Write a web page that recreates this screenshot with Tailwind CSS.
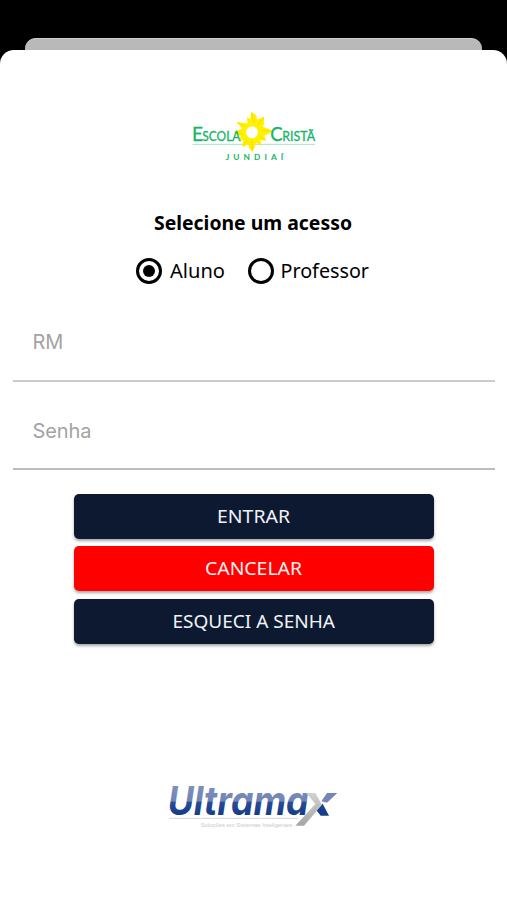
<!DOCTYPE html>
<html lang="pt-BR">
<head>
<meta charset="utf-8">
<meta name="viewport" content="width=device-width, initial-scale=1">
<title>Escola Cristã Jundiaí</title>
<script src="https://cdn.jsdelivr.net/npm/@tailwindcss/browser@4"></script>
</head>
<body class="bg-black">
<div class="flex h-[900px] w-[507px] flex-col overflow-hidden bg-black pt-[38px] font-['Noto_Sans',sans-serif] text-black">
  <div class="mx-[25px] h-[12px] shrink-0 rounded-t-[11px] border-t border-[#cfcfcf] bg-[#b9b9b9]"></div>
  <main class="flex grow flex-col items-center rounded-t-[14px] bg-white pt-[50px]">
    <svg class="mr-[-3px] h-[70px] w-[150px] shrink-0" viewBox="0 0 450 210" role="img" aria-label="Escola Cristã Jundiaí">
      <path d="M38 133H405" stroke="#a5e3c2" stroke-width="3"/>
      <path fill="#fff100" d="M214 35L229 45L231 59L252 50L252 72L249 80L278 92L265 103L252 107L258 122L240 121L246 137L228 128L223 145L217 156L207 143L206 132L187 142L190 120L181 124L181 108L161 97L178 89L186 86L170 65L193 70L203 69L200 52L211 57Z"/>
      <path d="M214 39L221 66M250 54L236 73M272 92L244 92M256 119L239 109M217 150L216 121M190 138L202 117M168 97L192 103M173 68L197 80" stroke="#ffda00" stroke-width="3"/>
      <circle cx="216" cy="97" r="18" fill="#fff"/>
      <g fill="#16b568" stroke="#16b568" stroke-width="1" font-family="Lato, sans-serif">
        <text x="36" y="123" font-size="60" textLength="33" lengthAdjust="spacingAndGlyphs">E</text>
        <text x="67" y="123" font-size="41" textLength="114" lengthAdjust="spacingAndGlyphs">SCOLA</text>
        <text x="271" y="123" font-size="60" textLength="37" lengthAdjust="spacingAndGlyphs">C</text>
        <text x="307" y="123" font-size="41" textLength="98" lengthAdjust="spacingAndGlyphs">RISTÃ</text>
        <text x="137" y="181" font-size="25" stroke="none" font-weight="700" textLength="173" lengthAdjust="spacing">JUNDIAÍ</text>
      </g>
    </svg>
    <h1 class="mt-[37px] mr-[2px] h-8 font-bold"><svg class="h-8 w-[204px]" viewBox="0 0 204 32"><text x="3" y="23" font-size="20" textLength="198" lengthAdjust="spacingAndGlyphs">Selecione um acesso</text></svg></h1>
    <div class="mt-[18px] mr-px flex h-7 w-[234px] items-center text-[20px]">
      <span class="flex size-[26px] shrink-0 items-center justify-center rounded-full border-[3px] border-black"><span class="size-[12px] rounded-full bg-black"></span></span>
      <svg class="ml-[7px] h-7 w-[57px] shrink-0" viewBox="0 0 57 28"><text x="1" y="21" font-size="20" textLength="55" lengthAdjust="spacingAndGlyphs">Aluno</text></svg>
      <span class="ml-[22px] size-[26px] shrink-0 rounded-full border-[3px] border-black"></span>
      <svg class="ml-[6px] h-7 w-[90px] shrink-0" viewBox="0 0 90 28"><text x="0.5" y="21" font-size="20" textLength="88.5" lengthAdjust="spacingAndGlyphs">Professor</text></svg>
    </div>
    <div class="mt-[18px] ml-px flex h-[79px] w-[482px] items-center border-b-2 border-[#cbcbcb] pt-px pl-[19.5px] font-['Inter',sans-serif] text-[20px] text-[#a3a3a3]">RM</div>
    <div class="mt-[10px] ml-px flex h-[78px] w-[482px] items-center border-b-2 border-[#bdbdbd] pt-px pl-[19.5px] font-['Inter',sans-serif] text-[20px] tracking-[-0.1px] text-[#a3a3a3]">Senha</div>
    <div class="mt-[23.5px] ml-px flex w-[360px] flex-col gap-[7.5px] text-white">
      <button class="flex h-[45px] items-center justify-center rounded-[5px] bg-[#0c1931] shadow-[0_2px_3px_rgba(0,0,0,.35)]"><svg class="h-7 w-[74px]" viewBox="0 0 74 28" fill="#f0f3f8"><text x="0" y="20.5" font-size="18.5" textLength="73" lengthAdjust="spacingAndGlyphs">ENTRAR</text></svg></button>
      <button class="flex h-[45px] items-center justify-center rounded-[5px] bg-[#ff0000] shadow-[0_2px_3px_rgba(0,0,0,.35)]"><svg class="h-7 w-[98px]" viewBox="0 0 98 28" fill="#fff0f0"><text x="0" y="20" font-size="18.5" textLength="97" lengthAdjust="spacingAndGlyphs">CANCELAR</text></svg></button>
      <button class="flex h-[45px] items-center justify-center rounded-[5px] bg-[#0c1931] shadow-[0_2px_3px_rgba(0,0,0,.35)]"><svg class="h-7 w-[164px]" viewBox="0 0 164 28" fill="#f0f3f8"><text x="0.5" y="20.5" font-size="18.5" textLength="162.5" lengthAdjust="spacingAndGlyphs">ESQUECI A SENHA</text></svg></button>
    </div>
    <svg class="mt-[126.5px] mr-[2px] h-[70px] w-[195px] shrink-0" viewBox="0 0 585 210" role="img" aria-label="Ultramax">
      <defs>
        <linearGradient id="brand" gradientUnits="userSpaceOnUse" x1="0" y1="45" x2="0" y2="138">
          <stop offset="0" stop-color="#7d91be"/><stop offset=".52" stop-color="#6f84b5"/><stop offset=".56" stop-color="#274c95"/><stop offset="1" stop-color="#153b87"/>
        </linearGradient>
        <linearGradient id="slash" x1="0" y1="0" x2="0" y2="1">
          <stop offset="0" stop-color="#d2d2d2"/><stop offset="1" stop-color="#a6a6a6"/>
        </linearGradient>
      </defs>
      <path d="M42 145H430" stroke="#d5d5d5" stroke-width="3"/>
      <text x="38" y="136" font-size="118" font-family="Inter, sans-serif" font-weight="700" font-style="italic" fill="url(#brand)" textLength="423" lengthAdjust="spacingAndGlyphs">Ultrama</text>
      <path fill="#7387b5" d="M516 69H547L516 98L499 94Z"/>
      <path fill="#173e8a" d="M503 101L522 137H497L484 121Z"/>
      <path fill="url(#slash)" d="M454 69H481L501 104L447 167H421L481 102Z"/>
      <text x="137" y="172" font-size="18" font-family="Liberation Sans, sans-serif" fill="#c8c8c8" textLength="275" lengthAdjust="spacingAndGlyphs">Soluções em Sistemas Inteligentes</text>
    </svg>
  </main>
</div>
</body>
</html>
